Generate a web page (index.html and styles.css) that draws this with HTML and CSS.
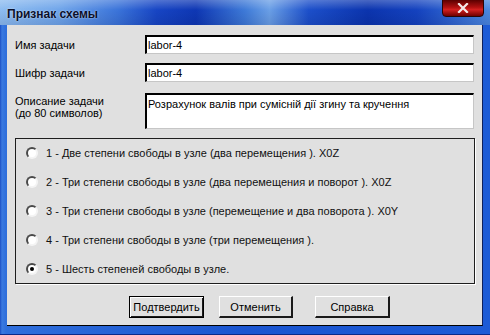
FILE: index.html
```html
<!DOCTYPE html>
<html lang="ru">
<head>
    <meta charset="UTF-8">
    <title>Признак схемы</title>
    <link rel="stylesheet" href="styles.css">
</head>
<body>
    <div class="window">
        <div class="titlebar">
            <span class="title">Признак схемы</span>
            <span class="close">
                <svg width="12" height="10" viewBox="0 0 12 10">
                    <path d="M2 1 L10 9 M10 1 L2 9" stroke="#f4eaea" stroke-width="2.2" stroke-linecap="square"/>
                </svg>
            </span>
        </div>

        <div class="client">
            <div class="fields">
                <span class="field-label">Имя задачи</span>
                <div class="edit">labor-4</div>

                <span class="field-label">Шифр задачи</span>
                <div class="edit">labor-4</div>

                <span class="field-label top">Описание задачи<br>(до 80 символов)</span>
                <div class="edit memo">Розрахунок валів при сумісній дії згину та кручення</div>
            </div>

            <div class="group">
                <label class="option"><span class="radio"></span>1 - Две степени свободы в узле (два перемещения ). X0Z</label>
                <label class="option"><span class="radio"></span>2 - Три степени свободы в узле (два перемещения и поворот ). X0Z</label>
                <label class="option"><span class="radio"></span>3 - Три степени свободы в узле (перемещение и два поворота ). X0Y</label>
                <label class="option"><span class="radio"></span>4 - Три степени свободы в узле (три перемещения ).</label>
                <label class="option"><span class="radio checked"></span>5 - Шесть степеней свободы в узле.</label>
            </div>

            <div class="buttons">
                <button class="btn default">Подтвердить</button>
                <button class="btn cancel">Отменить</button>
                <button class="btn help">Справка</button>
            </div>
        </div>
    </div>
</body>
</html>
```

FILE: styles.css
```css
html, body {
    margin: 0;
    padding: 0;
}
body {
    width: 490px;
    height: 335px;
    overflow: hidden;
    font-family: "Liberation Sans", Arial, sans-serif;
    font-size: 11px;
    color: #000;
}
.window {
    width: 490px;
    height: 335px;
    box-sizing: border-box;
    display: flex;
    flex-direction: column;
    background: linear-gradient(90deg, #1c4fc4 0px, #3a7ae0 2px, #2f6fdc 6px, #1a55d0 50%, #1d5bd6 100%);
    border-bottom: 1px solid #0a2a8a;
}
.titlebar {
    height: 25px;
    flex: none;
    display: flex;
    justify-content: space-between;
    align-items: flex-start;
    padding: 0 6px 0 7px;
    background:
        linear-gradient(180deg, rgba(255,255,255,0.25) 0%, rgba(255,255,255,0) 40%, rgba(0,0,40,0.1) 100%),
        linear-gradient(90deg, #8dbcf0 0%, #6fa5ea 12%, #3b74da 24%, #1745c4 32%, #0e37b4 40%, #3e7ad8 50%, #6a9fe6 55%, #1c4fca 63%, #0b34ae 75%, #1442bf 85%, #4c88e0 100%);
}
.title {
    margin-top: 7px;
    font-weight: bold;
    font-size: 12px;
    color: #0a0f2a;
    text-shadow: 0 0 2px rgba(255,255,255,0.7);
}
.close {
    width: 40px;
    height: 16px;
    margin-top: -1px;
    display: flex;
    align-items: center;
    justify-content: center;
    border: 1px solid #2a0505;
    border-radius: 0 0 4px 4px;
    background: linear-gradient(180deg, #5a0000 0%, #b01010 45%, #d42020 60%, #700000 100%);
}
.client {
    flex: 1;
    margin: 0 7px 8px 7px;
    padding: 10px 8px 0 8px;
    background: #e0e0e0;
    border-right: 1px solid #10205a;
    border-bottom: 1px solid #000;
}
.fields {
    display: grid;
    grid-template-columns: 130px 1fr;
    grid-template-rows: 19px 19px 38px;
    row-gap: 9px;
}
.field-label {
    align-self: center;
}
.field-label.top {
    align-self: start;
    margin-top: 4px;
    line-height: 12px;
}
.edit {
    box-sizing: border-box;
    background: #fff;
    border-style: solid;
    border-width: 2px 1px 1px 2px;
    border-color: #000 #c6c6c6 #c6c6c6 #000;
    padding: 0 3px 0 1px;
    line-height: 16px;
}
.memo {
    margin-top: 2px;
    padding-top: 3px;
    line-height: 13px;
}
.group {
    box-sizing: border-box;
    height: 146px;
    margin: 9px -1px 0 0;
    border: 1px solid #1e1e1e;
    box-shadow: 1px 1px 0 #fff;
    display: flex;
    flex-direction: column;
}
.option {
    height: 29px;
    display: flex;
    align-items: center;
    padding-left: 10px;
    gap: 8px;
    color: #111;
}
.radio {
    box-sizing: border-box;
    flex: none;
    width: 12px;
    height: 12px;
    border-radius: 50%;
    border: 2px solid;
    border-color: #4a4a4a #f4f4f4 #f4f4f4 #4a4a4a;
    background: #fff;
    display: flex;
    align-items: center;
    justify-content: center;
}
.radio.checked::after {
    content: "";
    width: 4px;
    height: 4px;
    border-radius: 50%;
    background: #000;
}
.buttons {
    display: flex;
    margin-top: 12px;
    padding-left: 114px;
}
.btn {
    box-sizing: border-box;
    height: 22px;
    padding: 0;
    font-family: "Liberation Sans", Arial, sans-serif;
    font-size: 11px;
    color: #000;
    background: #e0e0e0;
    border-style: solid;
    border-width: 1px 2px 2px 1px;
    border-color: #fff #1a1a1a #1a1a1a #fff;
}
.btn.default {
    width: 75px;
    border: 1px solid #000;
    box-shadow: inset 1px 1px 0 #fff, inset -1px -1px 0 #1a1a1a;
}
.btn.cancel {
    width: 74px;
    margin-left: 15px;
}
.btn.help {
    width: 75px;
    margin-left: 22px;
}
```
